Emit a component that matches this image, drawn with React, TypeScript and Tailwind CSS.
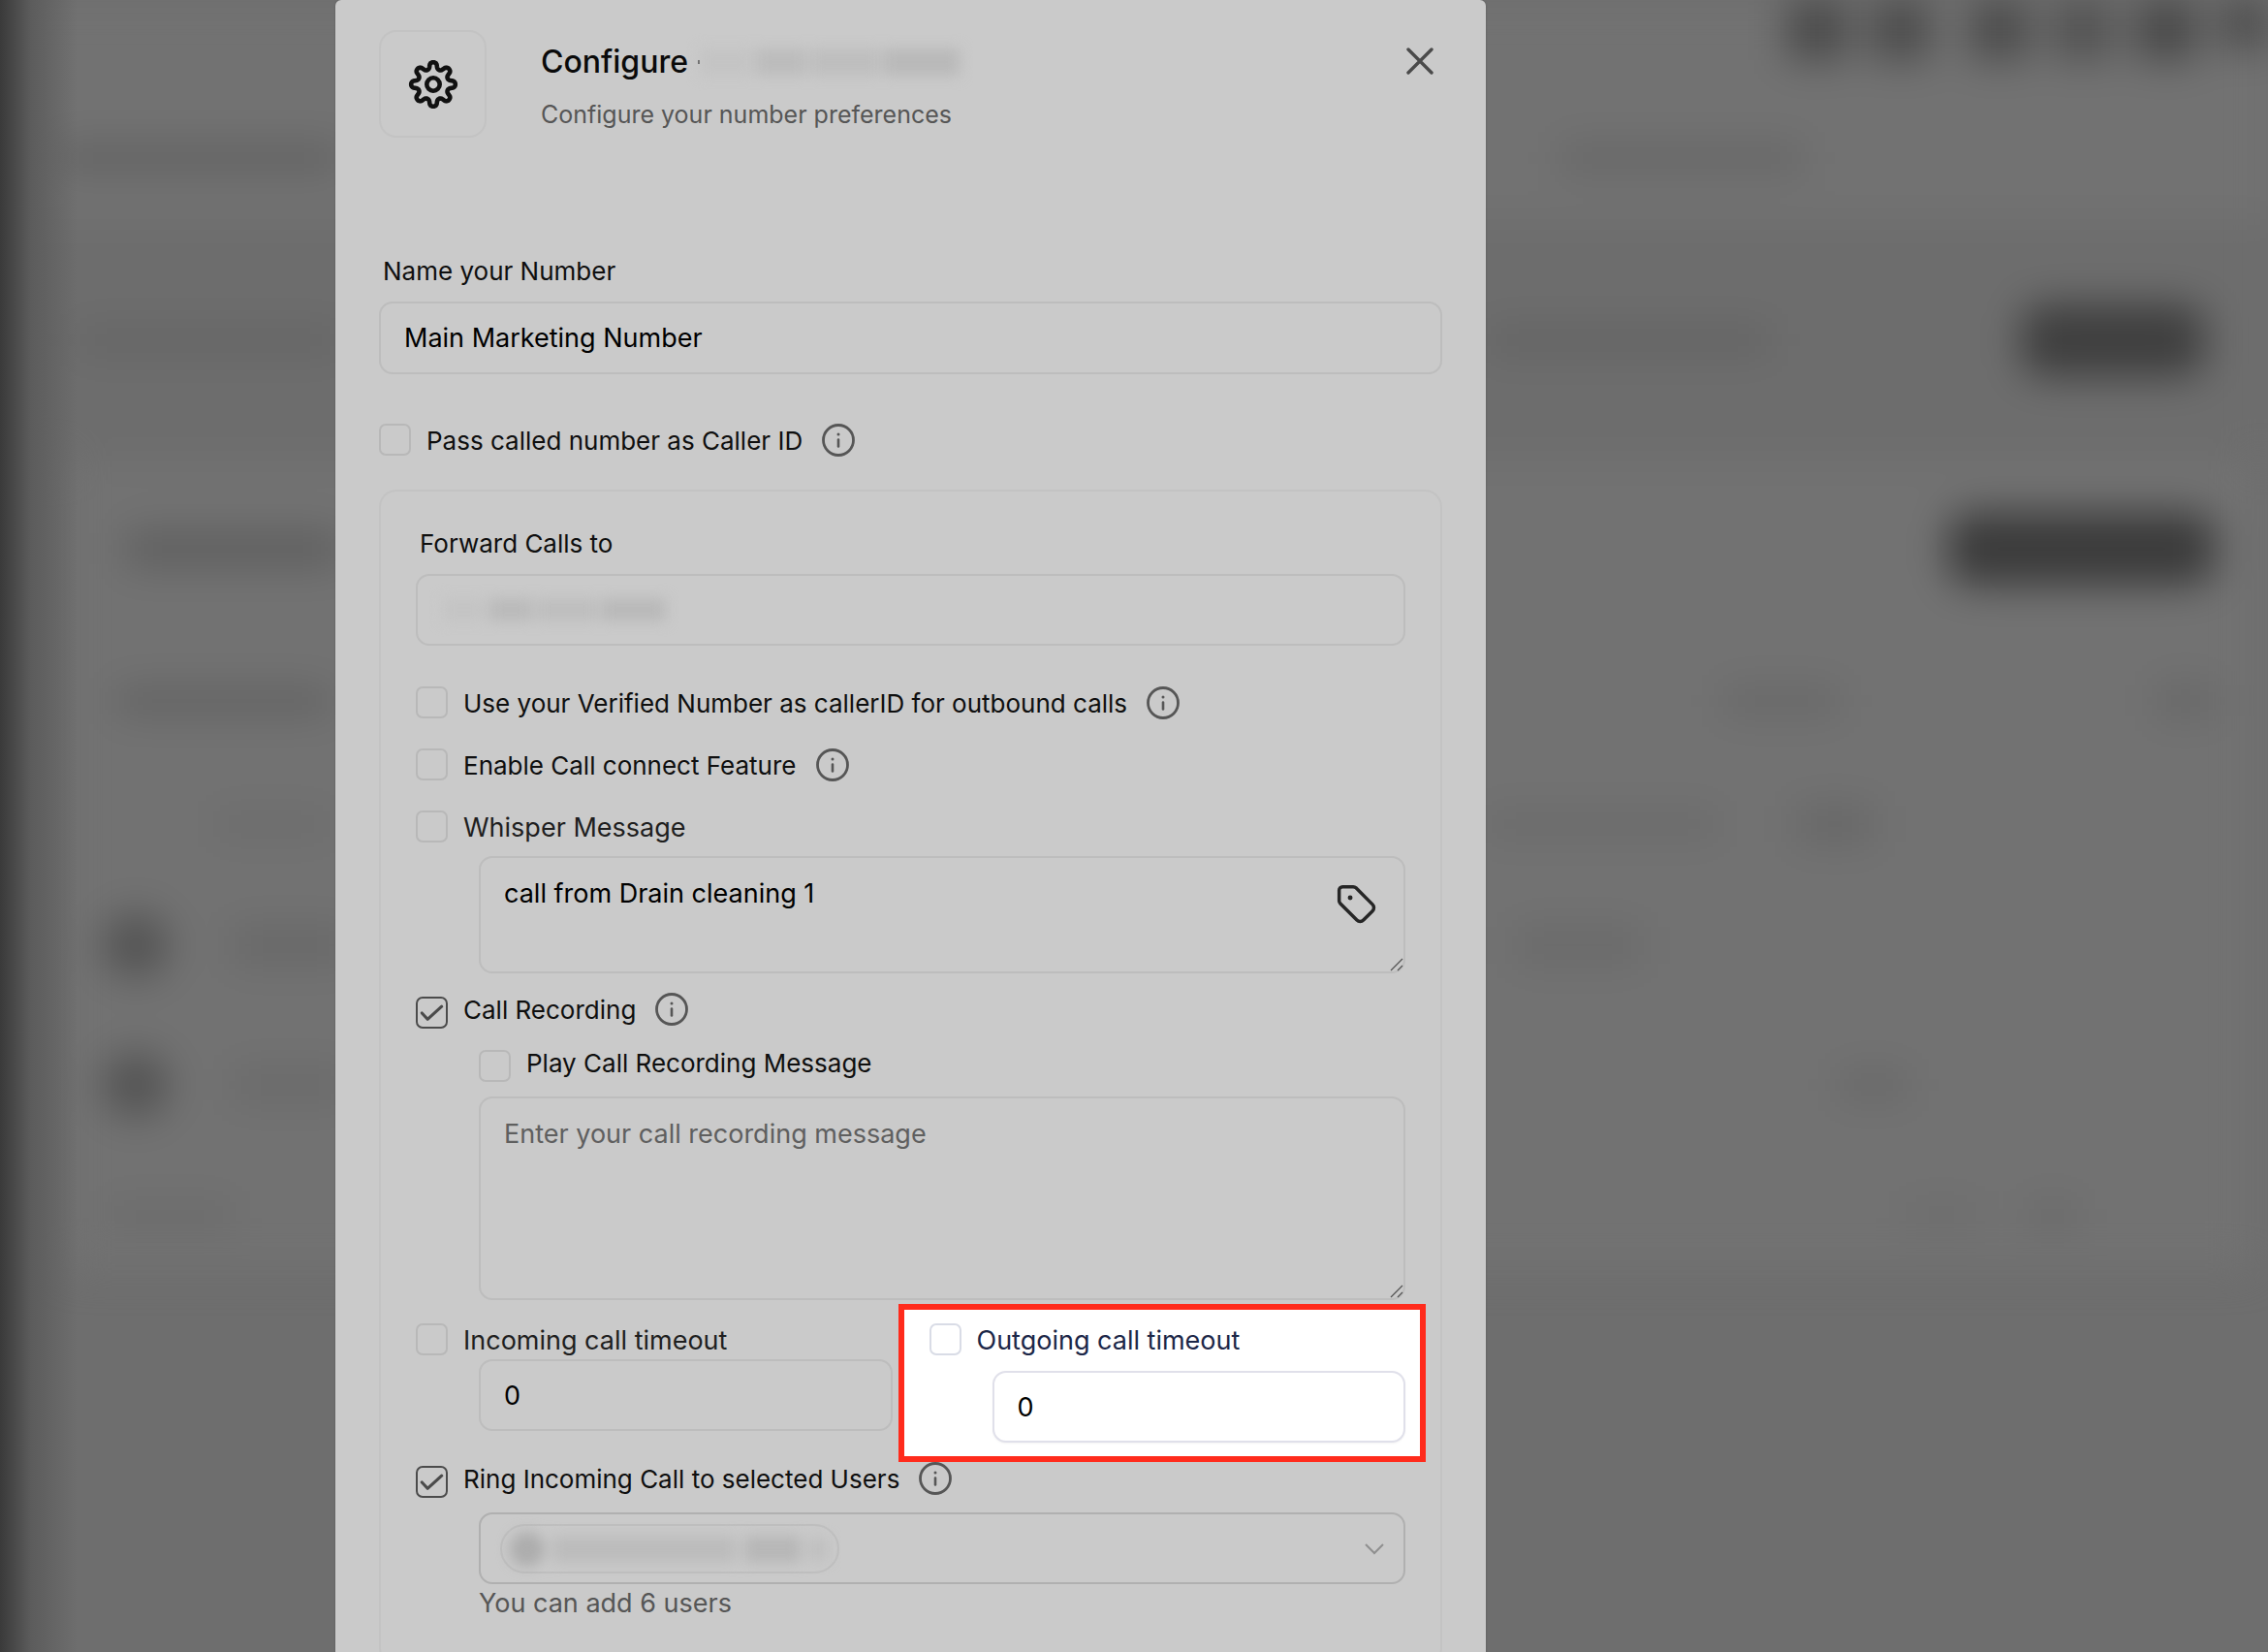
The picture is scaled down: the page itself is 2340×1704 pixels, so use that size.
import { useState } from 'react';
import type { ReactNode } from 'react';

const fieldClass =
  'block w-full rounded-[14px] border-2 border-[#bdbdbd] bg-transparent px-6 text-[27px] leading-9 text-black outline-none placeholder:text-[#5f5f5f] placeholder:opacity-100';

// eight-lobed cog outline, sampled in polar coordinates
const cogPath =
  Array.from({ length: 192 }, (_, i) => {
    const t = (i / 192) * Math.PI * 2;
    const r = 19.4 + 3.4 * Math.cos(8 * t);
    const a = t + 0.035 * Math.sin(16 * t);
    return `${i === 0 ? 'M' : 'L'}${(26 + r * Math.sin(a)).toFixed(2)} ${(26 - r * Math.cos(a)).toFixed(2)}`;
  }).join('') + 'Z';

function CogIcon() {
  return (
    <svg viewBox="0 0 52 52" className="size-[52px]" fill="none" stroke="#111" strokeWidth="4.6" strokeLinejoin="round">
      <path d={cogPath} />
      <circle cx="26" cy="26" r="6.7" />
    </svg>
  );
}

function InfoIcon() {
  return (
    <svg viewBox="0 0 34 34" className="ml-5 size-[34px] shrink-0" fill="none" stroke="#565656" strokeLinecap="round">
      <circle cx="17" cy="17" r="15.5" strokeWidth="2.8" />
      <path d="M17 16.5v7" strokeWidth="2.6" />
      <path d="M17 11h.01" strokeWidth="3" />
    </svg>
  );
}

function TagIcon() {
  return (
    <svg viewBox="0 0 24 24" className="size-11" fill="none" stroke="#262626" strokeWidth="1.9" strokeLinecap="round" strokeLinejoin="round">
      <path d="M2 3.9A1.9 1.9 0 0 1 3.9 2h6a2.2 2.2 0 0 1 1.56.64l9.3 9.3a2.6 2.6 0 0 1 0 3.7l-5.1 5.1a2.6 2.6 0 0 1-3.7 0l-9.3-9.3A2.2 2.2 0 0 1 2 9.9z" />
      <path d="M8.2 8.2h.01" strokeWidth="2.7" />
    </svg>
  );
}

function ResizeHandle() {
  return (
    <svg viewBox="0 0 14 14" className="pointer-events-none absolute right-0.5 bottom-0.5 size-3.5" fill="none" stroke="#555" strokeWidth="1.3">
      <path d="M1 13 13 1M8 13l5-5" />
    </svg>
  );
}

interface CheckRowProps {
  id: string;
  label: string;
  checked?: boolean;
  info?: boolean;
  low?: boolean;
  bright?: boolean;
  large?: boolean;
}

function CheckRow({ id, label, checked = false, info = false, low = false, bright = false, large = false }: CheckRowProps) {
  const [on, setOn] = useState(checked);
  return (
    <div className="flex h-[34px] items-start">
      <span className={`relative size-[33px] shrink-0 ${low ? 'mt-1' : ''}`}>
        <input
          id={id}
          type="checkbox"
          checked={on}
          onChange={(e) => setOn(e.target.checked)}
          className={`block size-[33px] cursor-pointer appearance-none rounded-[7px] border-2 ${
            bright ? 'border-[#d9dce6]' : on ? 'border-[#4b4b4b]' : 'border-[#b8b8b8]'
          }`}
        />
        {on && (
          <svg viewBox="0 0 34 34" className="pointer-events-none absolute inset-0 size-[33px]" fill="none" stroke="#4b4b4b" strokeWidth="3.2">
            <path d="m6.5 17.5 6 6.500L27.5 10.5" strokeLinecap="round" strokeLinejoin="round" />
          </svg>
        )}
      </span>
      <label
        htmlFor={id}
        className={`ml-4 cursor-pointer leading-9 whitespace-nowrap ${large ? 'text-[27px]' : 'text-[26px]'} ${
          bright ? 'text-[#1c2748]' : large ? 'text-[#1f1f1f]' : 'text-[#0f0f0f]'
        }`}
      >
        {label}
      </label>
      {info && <InfoIcon />}
    </div>
  );
}

function Bar({ className }: { className: string }) {
  return <span className={`block shrink-0 ${className}`} />;
}

function PageRow({ className, left, right }: { className: string; left?: ReactNode; right?: ReactNode }) {
  return (
    <div className={`grid shrink-0 grid-cols-[346fr_1187fr_807fr] items-center ${className}`}>
      <div className="flex items-center">{left}</div>
      <div />
      <div className="flex items-center">{right}</div>
    </div>
  );
}

// page behind the dialog, out of focus
function Backdrop() {
  return (
    <div aria-hidden="true" className="absolute inset-0 overflow-hidden bg-[#6e6e6e]">
      <div className="flex flex-col blur-[20px]">
        <PageRow
          className="h-[100px] bg-[#727272]"
          right={
            <div className="flex w-full justify-end gap-6 pb-11">
              <Bar className="size-[62px] bg-[#4a4a4a]" />
              <Bar className="size-[62px] bg-[#4c4c4c]" />
              <Bar className="ml-4 size-[62px] bg-[#4c4c4c]" />
              <Bar className="size-[62px] bg-[#525252]" />
              <Bar className="size-[62px] bg-[#484848]" />
              <Bar className="size-[50px] bg-[#4c4c4c]" />
            </div>
          }
        />
        <PageRow
          className="h-[126px] bg-[#727272]"
          left={<Bar className="ml-[60px] h-7 w-[290px] bg-[#616161]" />}
          right={<Bar className="ml-[75px] h-7 w-[250px] bg-[#666]" />}
        />
        <PageRow
          className="h-[250px] bg-[#6d6d6d]"
          left={<Bar className="ml-[80px] h-7 w-[270px] bg-[#656565]" />}
          right={
            <>
              <Bar className="h-7 w-[290px] bg-[#636363]" />
              <Bar className="mr-[65px] ml-auto h-[76px] w-[190px] rounded-3xl bg-[#3f3f3f]" />
            </>
          }
        />
        <div className="mr-4 ml-[70px] shrink-0 bg-[#727272]">
          <div className="-mr-4 -ml-[70px]">
            <PageRow
              className="h-[180px]"
              left={<Bar className="ml-[130px] h-9 w-[220px] bg-[#5e5e5e]" />}
              right={<Bar className="mr-[55px] ml-auto h-[76px] w-[275px] rounded-3xl bg-[#3b3b3b]" />}
            />
            <PageRow
              className="h-[134px]"
              left={<Bar className="ml-[120px] h-6 w-[220px] bg-[#5f5f5f]" />}
              right={
                <>
                  <Bar className="ml-[245px] h-7 w-[120px] bg-[#676767]" />
                  <Bar className="mr-[55px] ml-auto h-9 w-[60px] bg-[#676767]" />
                </>
              }
            />
            <PageRow
              className="h-[120px]"
              left={<Bar className="ml-[220px] h-6 w-[120px] bg-[#6b6b6b]" />}
              right={
                <>
                  <Bar className="h-6 w-[240px] bg-[#696969]" />
                  <Bar className="ml-[80px] h-10 w-[80px] bg-[#676767]" />
                </>
              }
            />
            <PageRow
              className="h-[130px]"
              left={
                <>
                  <Bar className="ml-[106px] size-[68px] rounded-full bg-[#535353]" />
                  <Bar className="ml-[65px] h-10 w-[120px] bg-[#686868]" />
                </>
              }
              right={<Bar className="ml-[25px] h-10 w-[130px] bg-[#6a6a6a]" />}
            />
            <PageRow
              className="h-[158px]"
              left={
                <>
                  <Bar className="ml-[106px] size-[68px] rounded-full bg-[#535353]" />
                  <Bar className="ml-[65px] h-9 w-[120px] bg-[#6a6a6a]" />
                </>
              }
              right={<Bar className="ml-[360px] h-7 w-[70px] bg-[#676767]" />}
            />
            <PageRow
              className="h-[110px]"
              left={<Bar className="ml-[110px] h-6 w-[130px] bg-[#6a6a6a]" />}
              right={
                <>
                  <Bar className="ml-[430px] h-6 w-[80px] bg-[#6c6c6c]" />
                  <Bar className="ml-[50px] h-7 w-[50px] bg-[#696969]" />
                </>
              }
            />
          </div>
        </div>
      </div>
      <div className="absolute inset-y-0 left-0 w-[80px] bg-linear-to-r from-[#3a3a3a] via-[#5c5c5c] via-40% to-transparent" />
    </div>
  );
}

export default function App() {
  const [name, setName] = useState('Main Marketing Number');
  const [whisper, setWhisper] = useState('call from Drain cleaning 1');
  const [recordingMessage, setRecordingMessage] = useState('');
  const [incoming, setIncoming] = useState('0');
  const [outgoing, setOutgoing] = useState('0');

  return (
    <div className="relative h-screen overflow-hidden font-[Inter,sans-serif]">
      <Backdrop />
      <div className="relative grid grid-cols-[346fr_1187fr_807fr]">
        <main role="dialog" aria-labelledby="dialog-title" className="col-start-2 rounded-t-md bg-[#cacaca] px-[45px] pt-[31px] pb-16 shadow-[0_0_2px_#555]">
          <header className="flex items-start">
            <div className="flex size-[111px] shrink-0 items-center justify-center rounded-[18px] border-2 border-[#c3c3c3]">
              <CogIcon />
            </div>
            <div className="ml-14 pt-[13px]">
              <h1 id="dialog-title" className="flex items-center text-[32px] leading-10 font-medium text-[#0a0a0a]">
                Configure
                <span aria-hidden="true" className="ml-2.5 h-1 w-0.5 bg-[#3a3a3a]" />
                <span aria-hidden="true" className="flex gap-1 blur-[7px]">
                  <span className="h-7 w-[54px] bg-[#c4c4c4]" />
                  <span className="h-7 w-[52px] bg-[#bcbcbc]" />
                  <span className="h-7 w-[72px] bg-[#bebebe]" />
                  <span className="h-7 w-[78px] bg-[#b9b9b9]" />
                </span>
              </h1>
              <p className="mt-[18px] text-[25px] leading-8 text-[#565656]">Configure your number preferences</p>
            </div>
            <button type="button" aria-label="Close" className="mt-3 mr-[3px] ml-auto flex size-10 cursor-pointer items-center justify-center">
              <svg viewBox="0 0 28 28" className="size-7" fill="none" stroke="#4a4a4a" strokeWidth="3.4" strokeLinecap="round">
                <path d="m2 2 24 24M26 2 2 26" />
              </svg>
            </button>
          </header>

          <label htmlFor="number-name" className="mt-[120px] block pl-1 text-[26px] leading-9 text-[#0f0f0f]">
            Name your Number
          </label>
          <input id="number-name" type="text" value={name} onChange={(e) => setName(e.target.value)} className={`${fieldClass} mt-[13px] h-[75px]`} />

          <div className="mt-[51px]">
            <CheckRow id="pass-called" label="Pass called number as Caller ID" info />
          </div>

          <section className="mt-[34px] rounded-[18px] border-2 border-[#c3c3c3] px-9 pt-9 pb-11">
            <label htmlFor="forward-to" className="block pl-1 text-[26px] leading-9 text-[#0f0f0f]">
              Forward Calls to
            </label>
            <div className="relative mt-[13px]">
              <input id="forward-to" type="tel" className={`${fieldClass} h-[74px]`} />
              <div aria-hidden="true" className="pointer-events-none absolute inset-y-0 left-7 flex items-center gap-1 blur-[7px]">
                <span className="h-6 w-[44px] bg-[#c4c4c4]" />
                <span className="h-6 w-[44px] bg-[#bababa]" />
                <span className="h-6 w-[64px] bg-[#bebebe]" />
                <span className="h-6 w-[66px] bg-[#b9b9b9]" />
              </div>
            </div>

            <div className="mt-[42px] flex flex-col gap-[30px]">
              <CheckRow id="verified" label="Use your Verified Number as callerID for outbound calls" info />
              <CheckRow id="connect" label="Enable Call connect Feature" info />
              <CheckRow id="whisper" label="Whisper Message" large />
            </div>
            <div className="relative mt-[13px] ml-[65px]">
              <textarea
                aria-label="Whisper Message text"
                value={whisper}
                onChange={(e) => setWhisper(e.target.value)}
                className={`${fieldClass} h-[121px] resize-none pt-[19px]`}
              />
              <button type="button" aria-label="Insert tag" className="absolute top-7 right-7 cursor-pointer">
                <TagIcon />
              </button>
              <ResizeHandle />
            </div>

            <div className="mt-5">
              <CheckRow id="recording" label="Call Recording" checked info low />
            </div>
            <div className="mt-[21px] ml-[65px]">
              <CheckRow id="play-message" label="Play Call Recording Message" low />
            </div>
            <div className="relative mt-[18px] ml-[65px]">
              <textarea
                aria-label="Call recording message"
                placeholder="Enter your call recording message"
                value={recordingMessage}
                onChange={(e) => setRecordingMessage(e.target.value)}
                className={`${fieldClass} h-[210px] resize-none pt-[19px]`}
              />
              <ResizeHandle />
            </div>

            <div className="mt-6 grid grid-cols-2 gap-[38px]">
              <div>
                <CheckRow id="incoming" label="Incoming call timeout" large />
                <div className="mt-[3px] ml-[65px]">
                  <input
                    aria-label="Incoming call timeout value"
                    type="text"
                    inputMode="numeric"
                    value={incoming}
                    onChange={(e) => setIncoming(e.target.value)}
                    className={`${fieldClass} h-[74px]`}
                  />
                </div>
              </div>
              <div className="relative">
                <div className="absolute -top-5 -right-[21px] -bottom-5 -left-8 border-6 border-[#ff2b1c] bg-white" />
                <div className="relative">
                  <CheckRow id="outgoing" label="Outgoing call timeout" bright large />
                  <div className="mt-[15px] ml-[65px]">
                    <input
                      aria-label="Outgoing call timeout value"
                      type="text"
                      inputMode="numeric"
                      value={outgoing}
                      onChange={(e) => setOutgoing(e.target.value)}
                      className="block h-[74px] w-full rounded-[14px] border-2 border-[#e0e0ea] bg-white px-6 text-[27px] leading-9 text-black shadow-xs outline-none"
                    />
                  </div>
                </div>
              </div>
            </div>

            <div className="mt-5">
              <CheckRow id="ring-users" label="Ring Incoming Call to selected Users" checked info low />
            </div>
            <div className="relative mt-[18px] ml-[65px]">
              <select
                aria-label="Users to ring"
                className="block h-[74px] w-full cursor-pointer appearance-none rounded-[14px] border-2 border-[#b0b0b0] bg-transparent outline-none"
              >
                <option value="" />
              </select>
              <div
                aria-hidden="true"
                className="pointer-events-none absolute top-3 left-[22px] flex h-[51px] w-[350px] items-center rounded-full border-2 border-[#bfbfbf] pl-2"
              >
                <div className="flex items-center gap-2 blur-[7px]">
                  <span className="size-9 rounded-full bg-[#adadad]" />
                  <span className="h-7 w-[190px] bg-[#bcbcbc]" />
                  <span className="h-7 w-[58px] bg-[#b7b7b7]" />
                  <span className="h-6 w-[20px] bg-[#bfbfbf]" />
                </div>
              </div>
              <svg viewBox="0 0 20 12" className="pointer-events-none absolute top-8 right-[22px] h-3 w-5" fill="none" stroke="#8f8f8f" strokeWidth="2">
                <path d="m1 1 9 9 9-9" />
              </svg>
            </div>
            <p className="mt-0.5 ml-[65px] text-[27px] leading-9 text-[#565656]">You can add 6 users</p>
          </section>
        </main>
      </div>
    </div>
  );
}
